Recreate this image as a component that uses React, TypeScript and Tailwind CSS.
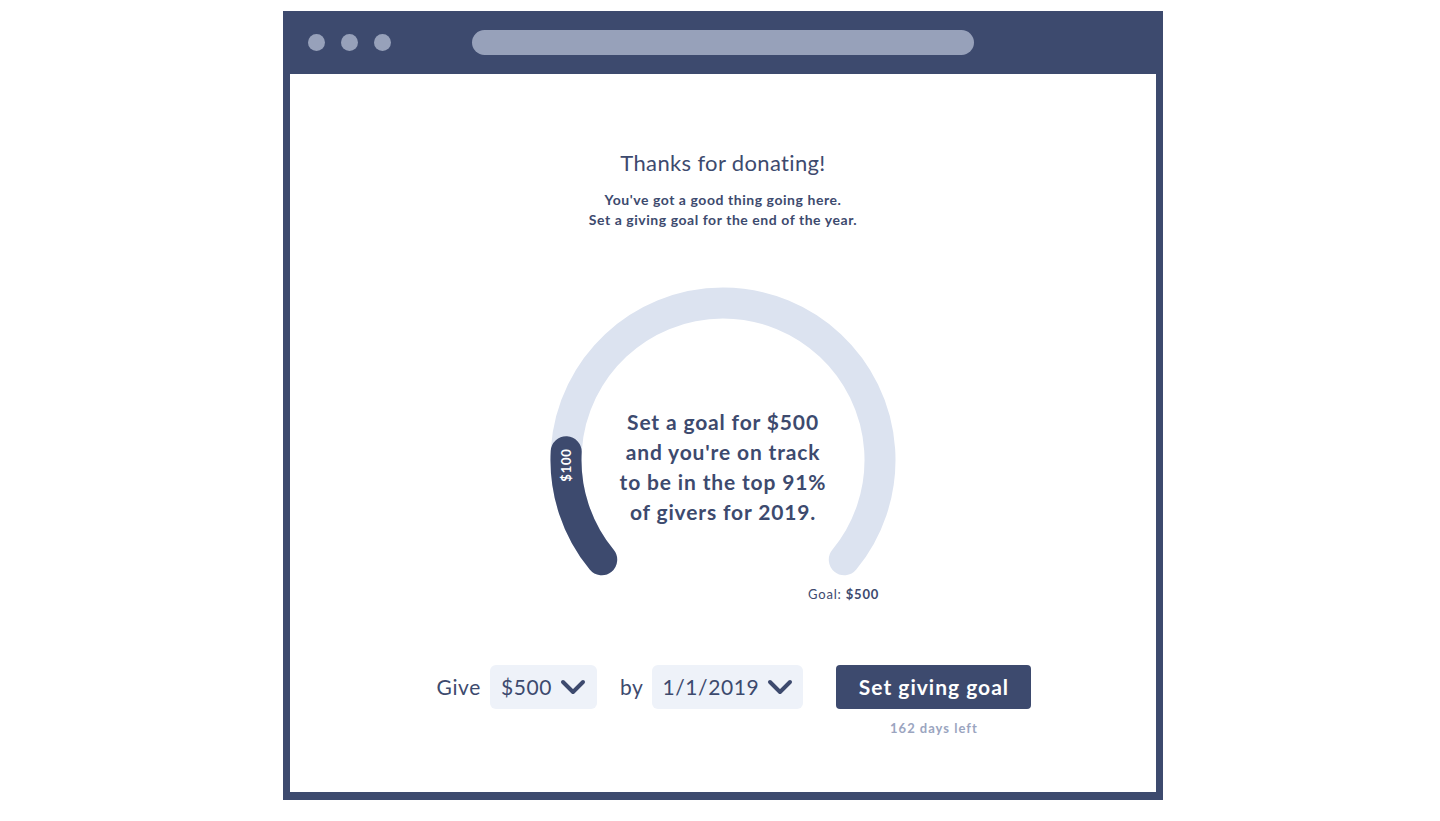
import React from 'react'

// Gauge geometry (svg coords, center 180/180, r 157)
const TRACK = 'M 58.7 279.7 A 157 157 0 1 1 301.3 279.7'
const PROGRESS = 'M 58.7 279.7 A 157 157 0 0 1 23.2 171.8'

function Chevron() {
  return (
    <svg width="26" height="16" viewBox="0 0 26 16" fill="none">
      <polyline
        points="3,3 13,13 23,3"
        stroke="#3d4a6e"
        strokeWidth="4"
        strokeLinecap="round"
        strokeLinejoin="round"
      />
    </svg>
  )
}

function Gauge() {
  return (
    <div className="relative w-[360px] h-[310px] mt-[50px]">
      <svg width="360" height="310" viewBox="0 0 360 310" fill="none">
        <path d={TRACK} stroke="#dce3f0" strokeWidth="31" strokeLinecap="round" />
        <path d={PROGRESS} stroke="#3d4a6e" strokeWidth="31" strokeLinecap="round" />
        <text
          x="23"
          y="185"
          transform="rotate(-90 23 185)"
          textAnchor="middle"
          dominantBaseline="central"
          fill="#ffffff"
          fontSize="13"
          fontWeight="700"
          letterSpacing="0.8"
          fontFamily="Lato, 'Liberation Sans', sans-serif"
        >
          $100
        </text>
      </svg>

      {/* copy inside the ring */}
      <div className="absolute inset-x-0 top-[127px] text-center text-[21px] leading-[30px] font-bold tracking-[0.85px] text-[#3d4a6e]">
        <p>Set a goal for $500</p>
        <p>and you're on track</p>
        <p>to be in the top 91%</p>
        <p>of givers for 2019.</p>
      </div>

      <div className="absolute left-[265px] top-[305px] text-[13px] leading-[18px] tracking-[0.8px] text-[#3d4a6e] whitespace-nowrap">
        Goal: <span className="font-bold">$500</span>
      </div>
    </div>
  )
}

export default function App() {
  return (
    <div className="min-h-screen bg-white" style={{ fontFamily: "Lato, 'Liberation Sans', sans-serif" }}>
      <div className="ml-[283px] pt-[11px]">
        <div className="w-[880px] bg-[#3d4a6e] px-[7px] pb-[8px]">
          {/* Browser chrome */}
          <div className="h-[63px] flex items-center pl-[18px]">
            <div className="flex gap-[16px]">
              <span className="w-[17px] h-[17px] rounded-full bg-[#97a1ba]" />
              <span className="w-[17px] h-[17px] rounded-full bg-[#97a1ba]" />
              <span className="w-[17px] h-[17px] rounded-full bg-[#97a1ba]" />
            </div>
            <div className="ml-[81px] w-[502px] h-[25px] rounded-full bg-[#97a1ba]" />
          </div>

          {/* Page */}
          <div className="h-[718px] bg-white flex flex-col items-center text-[#3d4a6e]">
            <h1 className="mt-[75px] text-[22px] leading-[28px] tracking-[0.35px]">Thanks for donating!</h1>
            <div className="mt-[13px] text-center text-[14px] leading-[20px] font-bold tracking-[0.55px]">
              <p>You've got a good thing going here.</p>
              <p>Set a giving goal for the end of the year.</p>
            </div>

            <Gauge />

            <div className="mt-[75px] ml-[22px] flex items-start text-[21px] tracking-[0.6px]">
              <div className="h-[44px] flex items-center">
                <span>Give</span>
                <button className="ml-[9px] h-[44px] w-[107px] rounded-md bg-[#eef2f9] flex items-center justify-between px-[11px] tracking-[0.6px] text-[#3d4a6e]">
                  <span>$500</span>
                  <Chevron />
                </button>
                <span className="ml-[23px]">by</span>
                <button className="ml-[9px] h-[44px] w-[151px] rounded-md bg-[#eef2f9] flex items-center justify-between px-[10px] tracking-[0.6px] text-[#3d4a6e]">
                  <span>1/1/2019</span>
                  <Chevron />
                </button>
              </div>
              <div className="ml-[33px] flex flex-col items-center">
                <button className="h-[44px] w-[195px] rounded bg-[#3d4a6e] text-white font-bold tracking-[1px]">
                  Set giving goal
                </button>
                <span className="mt-[10px] text-[13px] leading-[18px] font-bold tracking-[1px] text-[#9ba5bf]">162 days left</span>
              </div>
            </div>
          </div>
        </div>
      </div>
    </div>
  )
}
